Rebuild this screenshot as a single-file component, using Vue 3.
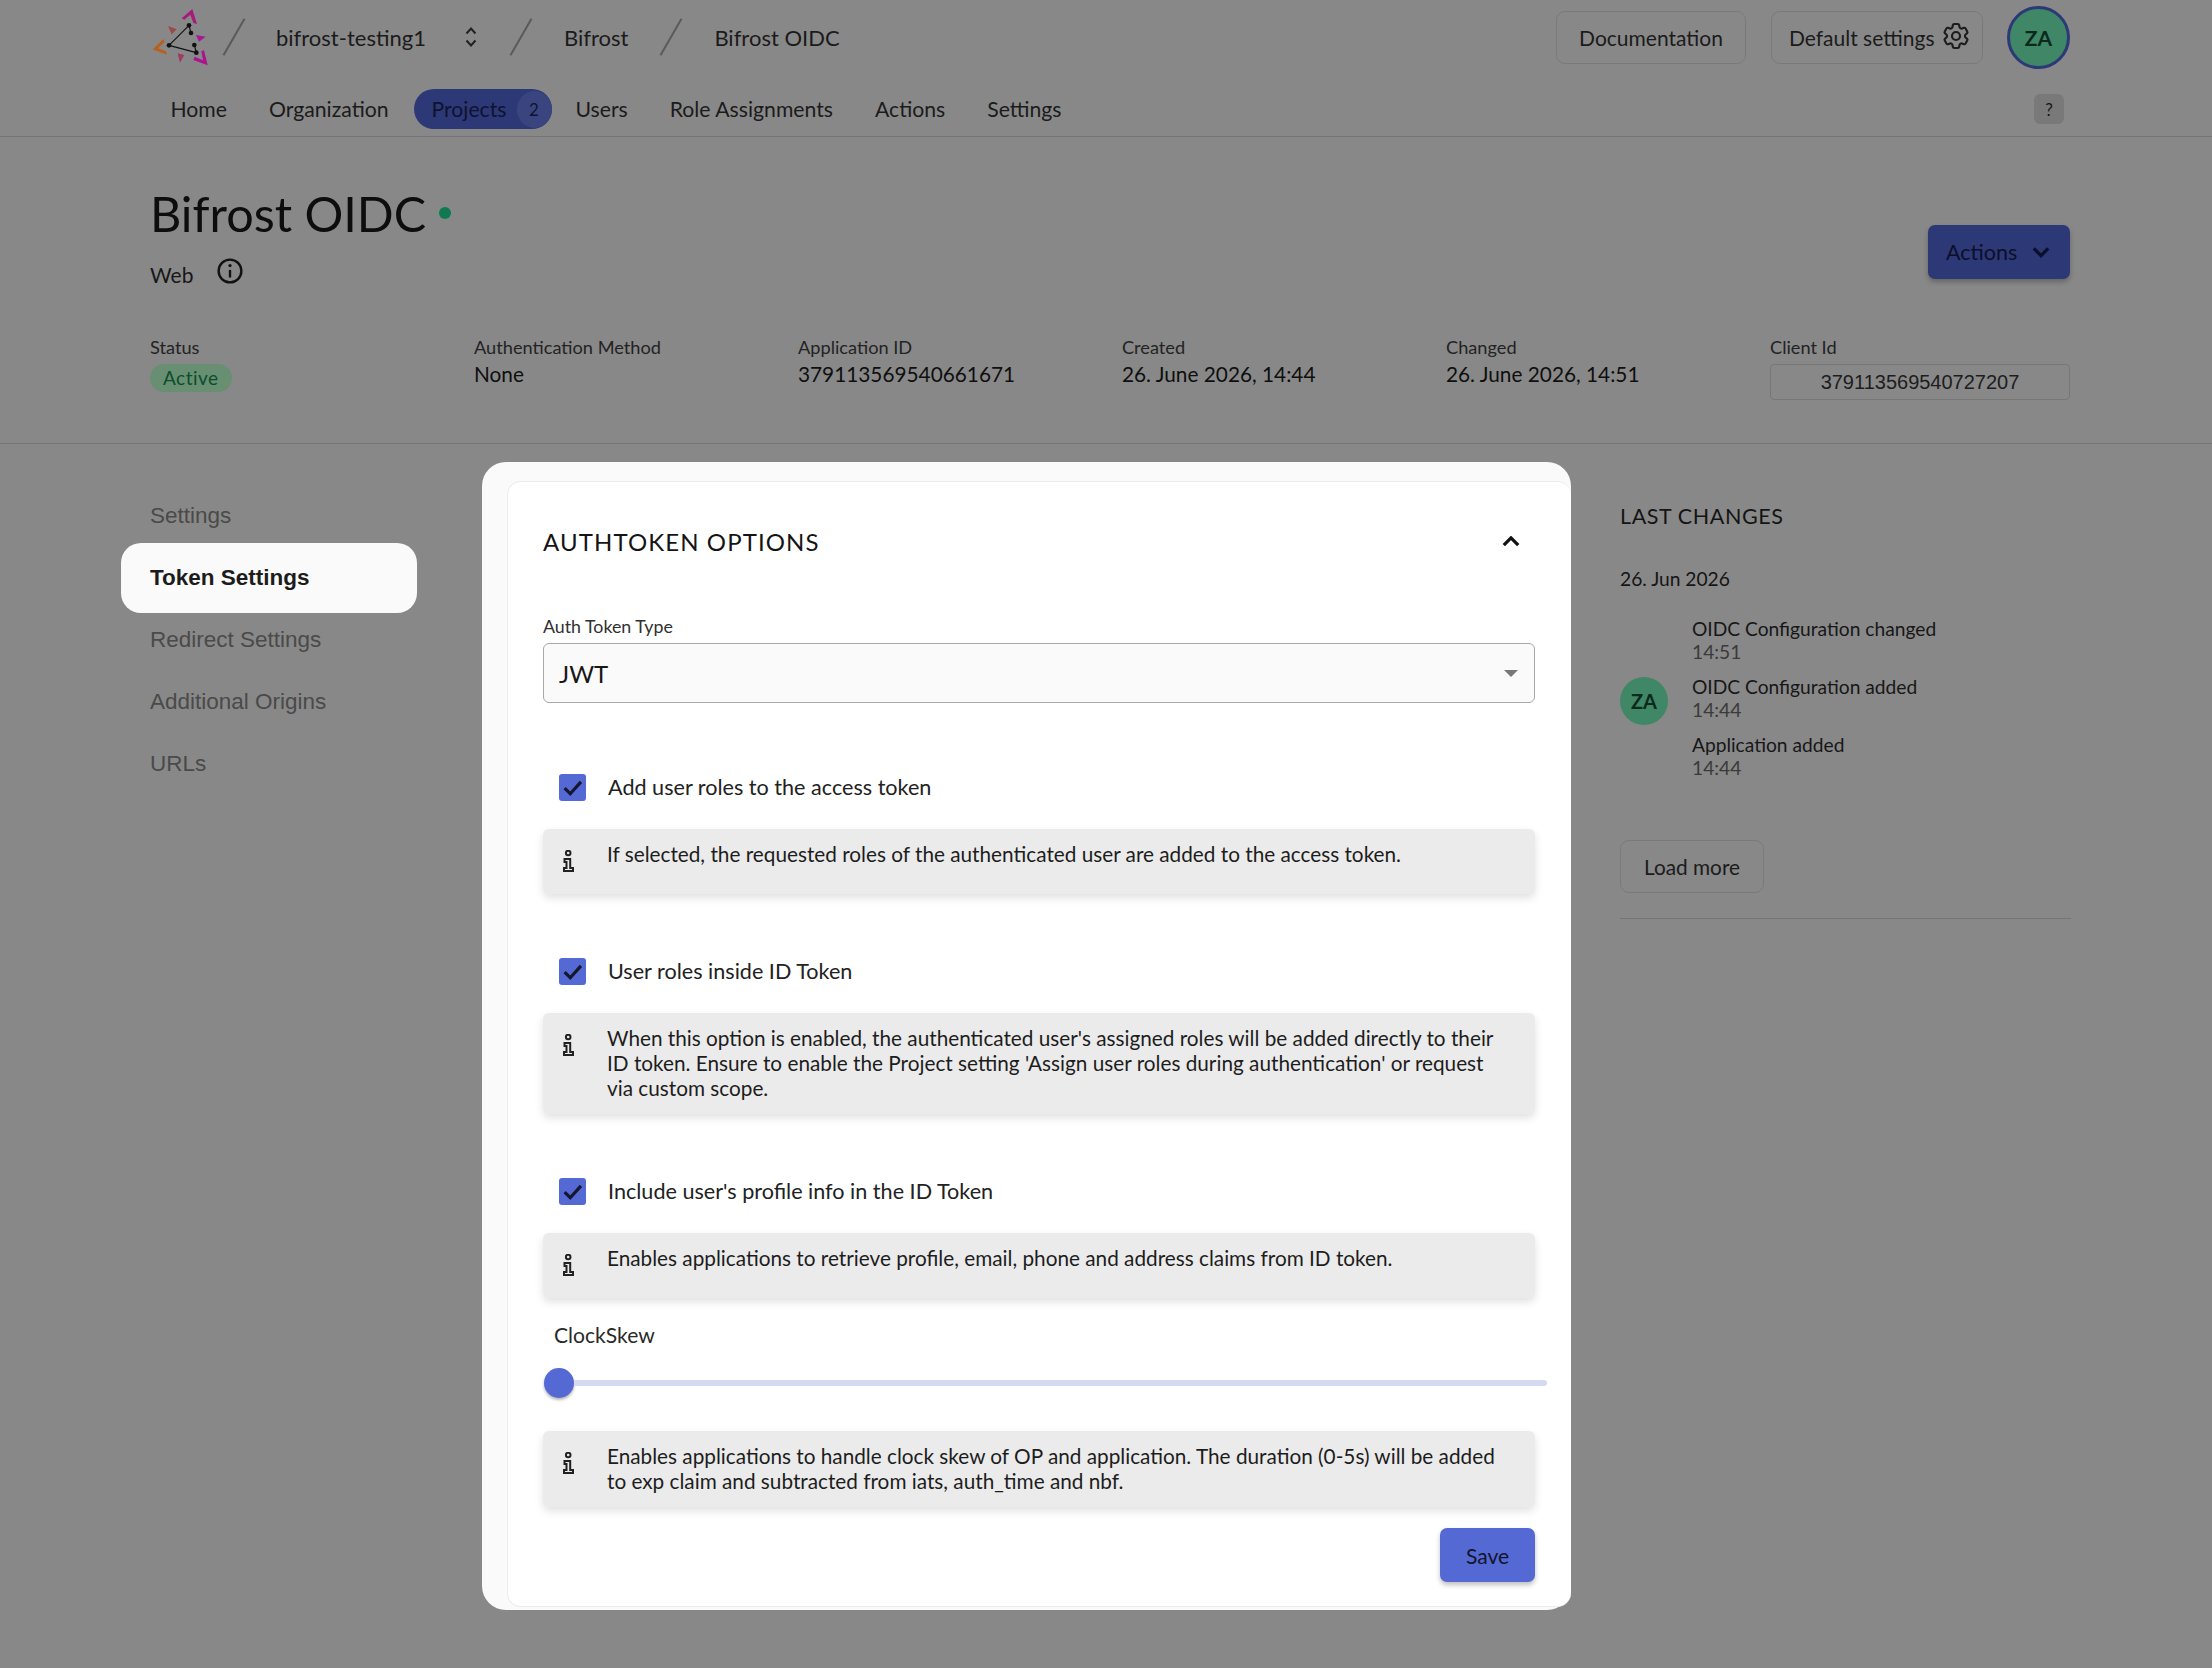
<template>
  <div class="page">
    <header class="top">
      <div class="top-row">
        <div class="crumbs">
          <svg class="logo" viewBox="63 24 180 180" aria-hidden="true">
            <polygon points="155,55 187,27 201,72 190,69 181,44 163,59" fill="#a51d7c" />
            <polygon points="190,180 233,196 222,151 214,153 219,181 194,170" fill="#a9158c" />
            <polygon points="100,117 68,148 111,164 108,154 84,145 104,126" fill="#b85f1e" />
            <polygon points="114,78 140,88 125,103" fill="#9a4a4a" />
            <polygon points="198,105 227,110 207,125" fill="#a51a90" />
            <polygon points="143,160 163,165 150,188" fill="#a03a62" />
            <path d="M177 76 117 136 199 158M177 76 183 99M193 135 199 158" fill="none" stroke="#111" stroke-width="3.500" />
            <g fill="#111">
              <circle cx="177" cy="76" r="7" />
              <circle cx="183" cy="99" r="7" />
              <circle cx="117" cy="136" r="7" />
              <circle cx="193" cy="135" r="7" />
              <circle cx="199" cy="158" r="7" />
            </g>
          </svg>
          <i class="slash slash-first"></i>
          <span class="crumb org-crumb">bifrost-testing1</span>
          <svg class="updown" viewBox="0 0 14 22" aria-hidden="true">
            <path d="M2.500 7.500 7 2.500l4.500 5M2.500 14.500 7 19.500l4.500-5" fill="none" stroke="#222" stroke-width="2" />
          </svg>
          <i class="slash"></i>
          <span class="crumb">Bifrost</span>
          <i class="slash"></i>
          <span class="crumb">Bifrost OIDC</span>
        </div>
        <div class="top-actions">
          <button class="ghost doc-btn">Documentation</button>
          <button class="ghost settings-btn">
            Default settings
            <svg class="gear" viewBox="0 0 24 24" aria-hidden="true">
              <path d="M9.594 3.94c.09-.542.56-.94 1.11-.94h2.593c.55 0 1.02.398 1.11.94l.213 1.281c.063.374.313.686.645.87.074.04.147.083.22.127.324.196.72.257 1.075.124l1.217-.456a1.125 1.125 0 011.37.49l1.296 2.247a1.125 1.125 0 01-.26 1.431l-1.003.827c-.293.24-.438.613-.431.992a6.759 6.759 0 010 .255c-.007.378.138.75.43.99l1.005.828c.424.35.534.954.26 1.43l-1.298 2.247a1.125 1.125 0 01-1.369.491l-1.217-.456c-.355-.133-.75-.072-1.076.124a6.57 6.57 0 01-.22.128c-.331.183-.581.495-.644.869l-.213 1.28c-.09.543-.56.941-1.11.941h-2.594c-.55 0-1.02-.398-1.11-.94l-.213-1.281c-.062-.374-.312-.686-.644-.87a6.52 6.52 0 01-.22-.127c-.325-.196-.72-.257-1.076-.124l-1.217.456a1.125 1.125 0 01-1.369-.49l-1.297-2.247a1.125 1.125 0 01.26-1.431l1.004-.827c.292-.24.437-.613.43-.992a6.932 6.932 0 010-.255c.007-.378-.138-.75-.43-.99l-1.004-.828a1.125 1.125 0 01-.26-1.43l1.297-2.247a1.125 1.125 0 011.37-.491l1.216.456c.356.133.751.072 1.076-.124.072-.044.146-.087.22-.128.332-.183.582-.495.644-.869l.214-1.281z" fill="none" stroke="#1c1c1c" stroke-width="1.600" />
              <path d="M15 12a3 3 0 11-6 0 3 3 0 016 0z" fill="none" stroke="#1c1c1c" stroke-width="1.600" />
            </svg>
          </button>
          <div class="avatar avatar-top">ZA</div>
        </div>
      </div>
      <div class="nav-row">
        <nav class="nav">
          <a v-for="item in navItems" :key="item.label" class="nav-item" :class="{ active: item.count }">
            {{ item.label }}
            <span v-if="item.count" class="nav-count">{{ item.count }}</span>
          </a>
        </nav>
        <span class="help">?</span>
      </div>
    </header>

    <section class="app-head">
      <div class="head-row">
        <div>
          <h1 class="title">Bifrost OIDC<i class="state-dot"></i></h1>
          <div class="type-row">
            <span>Web</span>
            <svg class="info-circle" viewBox="0 0 24 24" aria-hidden="true">
              <circle cx="12" cy="12" r="10.500" fill="none" stroke="#111" stroke-width="2.200" />
              <path d="M12 11v7" stroke="#111" stroke-width="2.200" fill="none" />
              <circle cx="12" cy="7" r="1.500" fill="#111" />
            </svg>
          </div>
        </div>
        <button class="actions-btn">
          Actions
          <svg viewBox="0 0 20 12" aria-hidden="true">
            <path d="M2 2l8 8 8-8" fill="none" stroke="#0b0f2a" stroke-width="3.600" />
          </svg>
        </button>
      </div>
      <div class="meta">
        <div v-for="m in metaItems" :key="m.label" class="meta-col">
          <div class="meta-label">{{ m.label }}</div>
          <span v-if="m.badge" class="badge">{{ m.value }}</span>
          <div v-else-if="m.box" class="client-box">{{ m.value }}</div>
          <div v-else class="meta-value">{{ m.value }}</div>
        </div>
      </div>
    </section>

    <div class="body">
      <aside class="side">
        <a v-for="s in sideItems" :key="s" class="side-item" :class="{ current: s === 'Token Settings' }">{{ s }}</a>
      </aside>

      <main class="panel">
        <div class="card">
          <div class="card-head">
            <h2>AUTHTOKEN OPTIONS</h2>
            <svg class="chev-up" viewBox="0 0 20 12" aria-hidden="true">
              <path d="M2 10l8-8 8 8" fill="none" stroke="#111" stroke-width="3.600" />
            </svg>
          </div>

          <label class="field-label">Auth Token Type</label>
          <div class="select">
            <span>JWT</span>
            <i class="caret"></i>
          </div>

          <div v-for="opt in options" :key="opt.label" class="option">
            <div class="check-row">
              <span class="checkbox">
                <svg viewBox="0 0 24 24" aria-hidden="true">
                  <path d="M5 12.500l5 5L19.500 7" fill="none" stroke="#14172e" stroke-width="2.800" />
                </svg>
              </span>
              {{ opt.label }}
            </div>
            <div class="info-box">
              <svg class="info-i" viewBox="0 0 11 22" aria-hidden="true">
                <circle cx="5.200" cy="3" r="2.300" fill="none" stroke="#222" stroke-width="2" />
                <path d="M1.500 9H7.200v9H10v3H1v-3h2.500v-6h-2z" fill="none" stroke="#222" stroke-width="2" />
              </svg>
              <p>{{ opt.text }}</p>
            </div>
          </div>

          <div class="skew-label">ClockSkew</div>
          <div class="slider">
            <i class="thumb"></i>
            <i class="track"></i>
          </div>
          <div class="info-box skew-info">
            <svg class="info-i" viewBox="0 0 11 22" aria-hidden="true">
              <circle cx="5.200" cy="3" r="2.300" fill="none" stroke="#222" stroke-width="2" />
              <path d="M1.500 9H7.200v9H10v3H1v-3h2.500v-6h-2z" fill="none" stroke="#222" stroke-width="2" />
            </svg>
            <p>Enables applications to handle clock skew of OP and application. The duration (0-5s) will be added to exp claim and subtracted from iats, auth_time and nbf.</p>
          </div>
          <div class="save-row">
            <button class="save">Save</button>
          </div>
        </div>
      </main>

      <aside class="changes">
        <h3>LAST CHANGES</h3>
        <div class="change-date">26. Jun 2026</div>
        <div class="change-group">
          <div class="avatar avatar-small">ZA</div>
          <ul>
            <li v-for="c in changes" :key="c.title + c.time">
              <div>{{ c.title }}</div>
              <div class="change-time">{{ c.time }}</div>
            </li>
          </ul>
        </div>
        <button class="ghost load-more">Load more</button>
        <div class="changes-rule"></div>
      </aside>
    </div>
  </div>
</template>

<script setup>
const navItems = [
  { label: 'Home' },
  { label: 'Organization' },
  { label: 'Projects', count: 2 },
  { label: 'Users' },
  { label: 'Role Assignments' },
  { label: 'Actions' },
  { label: 'Settings' },
]

const metaItems = [
  { label: 'Status', value: 'Active', badge: true },
  { label: 'Authentication Method', value: 'None' },
  { label: 'Application ID', value: '379113569540661671' },
  { label: 'Created', value: '26. June 2026, 14:44' },
  { label: 'Changed', value: '26. June 2026, 14:51' },
  { label: 'Client Id', value: '379113569540727207', box: true },
]

const sideItems = ['Settings', 'Token Settings', 'Redirect Settings', 'Additional Origins', 'URLs']

const options = [
  {
    label: 'Add user roles to the access token',
    text: 'If selected, the requested roles of the authenticated user are added to the access token.',
  },
  {
    label: 'User roles inside ID Token',
    text: "When this option is enabled, the authenticated user's assigned roles will be added directly to their ID token. Ensure to enable the Project setting 'Assign user roles during authentication' or request via custom scope.",
  },
  {
    label: "Include user's profile info in the ID Token",
    text: 'Enables applications to retrieve profile, email, phone and address claims from ID token.',
  },
]

const changes = [
  { title: 'OIDC Configuration changed', time: '14:51' },
  { title: 'OIDC Configuration added', time: '14:44' },
  { title: 'Application added', time: '14:44' },
]
</script>

<style>
html,
body {
  margin: 0;
  background: #888888;
}
</style>

<style scoped>
.page {
  width: 2212px;
  min-height: 1668px;
  background: #888888;
  color: #171717;
  font-family: Lato, "Liberation Sans", sans-serif;
  font-size: 21px;
}
button {
  font-family: inherit;
  cursor: pointer;
}

/* header */
.top {
  border-bottom: 1px solid #757575;
  height: 136px;
}
.top-row {
  display: flex;
  justify-content: space-between;
  align-items: center;
  height: 74px;
  padding: 0 142px 0 151px;
}
.crumbs {
  display: flex;
  align-items: center;
}
.logo {
  width: 60px;
  height: 60px;
  margin-top: 1px;
}
.slash {
  display: block;
  width: 2px;
  height: 42px;
  margin: 0 42px;
  background: #5a5a5a;
  transform: rotate(30deg);
}
.slash-first {
  margin: 0 41px 0 22px;
}
.crumb {
  font-size: 22px;
  color: #1b1b1b;
}
.org-crumb {
  margin-right: 38px;
}
.updown {
  width: 14px;
  height: 22px;
}
.top-actions {
  display: flex;
  align-items: center;
}
.ghost {
  height: 53px;
  border: 1px solid #7a7a7a;
  border-radius: 9px;
  background: transparent;
  color: #1b1b1b;
  font-size: 21px;
}
.doc-btn {
  width: 190px;
  padding: 0;
  margin-right: 25px;
}
.settings-btn {
  display: flex;
  align-items: center;
  gap: 5px;
  width: 212px;
  padding: 0 0 0 17px;
  margin-right: 24px;
}
.gear {
  width: 32px;
  height: 32px;
  margin-top: -2px;
}
.avatar {
  display: flex;
  align-items: center;
  justify-content: center;
  border-radius: 50%;
  background: #3f8767;
  color: #0b2a1c;
  font-weight: 700;
}
.avatar-top {
  width: 57px;
  height: 57px;
  border: 3px solid #2d3876;
  font-size: 21px;
}
.nav-row {
  display: flex;
  justify-content: space-between;
  align-items: center;
  height: 40px;
  margin-top: 15px;
  padding: 0 148px 0 149.500px;
}
.nav {
  display: flex;
  align-items: center;
}
.nav-item {
  padding: 0 21px;
  color: #1b1b1b;
  font-size: 21.200px;
}
.nav-item.active {
  display: flex;
  align-items: center;
  height: 40px;
  margin: 0 3px 0 4px;
  padding: 0 0 0 18px;
  border-radius: 20px;
  background: #2d3876;
  color: #0e1330;
}
.nav-count {
  display: flex;
  align-items: center;
  justify-content: center;
  width: 35px;
  height: 37px;
  margin-left: 10px;
  border-radius: 50%;
  background: #3a4580;
  font-size: 17px;
}
.help {
  display: flex;
  align-items: center;
  justify-content: center;
  width: 30px;
  height: 30px;
  border-radius: 6px;
  background: #797979;
  font-size: 17px;
}

/* app heading */
.app-head {
  border-bottom: 1px solid #757575;
  padding: 39px 142px 43px 150px;
}
.head-row {
  display: flex;
  justify-content: space-between;
}
.title {
  display: flex;
  align-items: center;
  margin: 0;
  font-size: 48.500px;
  font-weight: 400;
  line-height: 74px;
  color: #0d0d0d;
}
.state-dot {
  width: 12px;
  height: 12px;
  margin-left: 13px;
  border-radius: 50%;
  background: #0f7a52;
}
.type-row {
  display: flex;
  align-items: center;
  gap: 24px;
  height: 36px;
  margin-top: 6px;
  font-size: 21px;
}
.info-circle {
  width: 26px;
  height: 26px;
  margin-top: -7px;
}
.actions-btn {
  display: flex;
  align-items: center;
  justify-content: space-between;
  align-self: flex-end;
  width: 142px;
  height: 54px;
  margin-bottom: 13px;
  padding: 0 20px 0 18px;
  border: none;
  border-radius: 7px;
  background: #2d3876;
  color: #0b0f2a;
  font-size: 21.500px;
  box-shadow: 0 3px 5px rgba(0, 0, 0, 0.25);
}
.actions-btn svg {
  width: 18px;
  height: 12px;
}
.meta {
  display: grid;
  grid-template-columns: repeat(5, 324px) 300px;
  margin-top: 42px;
}
.meta-label {
  font-size: 18.200px;
  line-height: 26px;
  color: #232323;
}
.meta-value {
  margin-top: -1px;
  font-size: 20.800px;
  line-height: 30px;
  color: #0f0f0f;
}
.badge {
  display: inline-block;
  margin-top: 4px;
  padding: 0 13px;
  border-radius: 14px;
  background: #688f72;
  color: #0d4d2c;
  font-size: 19px;
  line-height: 28px;
  letter-spacing: 0.5px;
}
.client-box {
  height: 34px;
  margin-top: 4px;
  border: 1px solid #777777;
  border-radius: 4px;
  font-family: "Liberation Sans", sans-serif;
  font-size: 20px;
  line-height: 34px;
  text-align: center;
  color: #1d1d1d;
}

/* three columns */
.body {
  display: flex;
  align-items: flex-start;
  padding-left: 121px;
}
.side {
  display: flex;
  flex-direction: column;
  width: 296px;
  padding-top: 41px;
  margin-right: 65px;
  font-family: "Liberation Sans", sans-serif;
  font-size: 22.500px;
}
.side-item {
  display: flex;
  align-items: center;
  height: 62px;
  padding-left: 29px;
  color: #4a4a4a;
}
.side-item.current {
  height: 70px;
  margin: -4px 0;
  border-radius: 20px;
  background: #fafafa;
  color: #1c1c1c;
  font-weight: 700;
}
.panel {
  width: 1089px;
  margin-top: 18px;
  padding: 19px 0 3px 25px;
  box-sizing: border-box;
  border-radius: 24px;
  background: #fafafa;
}
.card {
  padding: 39px 36px 24px 35px;
  border: 1px solid #ececec;
  border-right: none;
  border-radius: 14px;
  background: #ffffff;
}
.card-head {
  display: flex;
  justify-content: space-between;
  align-items: center;
  height: 40px;
  margin-bottom: 52px;
}
.card-head h2 {
  margin: 0;
  font-size: 24px;
  font-weight: 400;
  letter-spacing: 1.100px;
  color: #141414;
}
.chev-up {
  width: 18px;
  height: 11px;
  margin-right: 15px;
}
.field-label {
  display: block;
  font-size: 17.800px;
  line-height: 26px;
  color: #303030;
}
.select {
  display: flex;
  align-items: center;
  justify-content: space-between;
  height: 60px;
  margin: 4px 0 64px;
  padding: 0 16px 0 15px;
  box-sizing: border-box;
  border: 1px solid #a8a8a8;
  border-radius: 6px;
  background: #fafafa;
  font-size: 24px;
}
.caret {
  width: 0;
  height: 0;
  border: 7px solid transparent;
  border-top: 7px solid #777777;
  border-bottom: none;
}
.option {
  margin-top: 57px;
}
.check-row {
  display: flex;
  align-items: center;
  height: 40px;
  padding-left: 16px;
  font-size: 21.600px;
  color: #222222;
}
.checkbox {
  display: flex;
  width: 27px;
  height: 27px;
  margin-right: 22px;
  border-radius: 3px;
  background: #5469d4;
}
.info-box {
  display: flex;
  gap: 33px;
  min-height: 65px;
  margin-top: 22px;
  padding: 13px 30px 13px 20px;
  box-sizing: border-box;
  border-radius: 6px;
  background: #ebebeb;
  box-shadow: 0 4px 8px rgba(0, 0, 0, 0.12);
  font-size: 20.750px;
  line-height: 25px;
  color: #1d1d1d;
}
.info-box p {
  margin: 0;
}
.info-i {
  flex: none;
  width: 11px;
  height: 22px;
  margin-top: 8px;
}
.skew-label {
  margin-top: 24px;
  padding-left: 11px;
  font-size: 21.100px;
  line-height: 26px;
  color: #2a2a2a;
}
.slider {
  display: flex;
  align-items: center;
  height: 30px;
  margin: 20px -12px 0 1px;
}
.thumb {
  flex: none;
  width: 30px;
  height: 30px;
  border-radius: 50%;
  background: #5469d4;
  box-shadow: 0 2px 3px rgba(0, 0, 0, 0.3);
}
.track {
  flex: 1;
  height: 6px;
  border-radius: 0 3px 3px 0;
  background: #d4daf4;
}
.skew-info {
  margin-top: 33px;
}
.save-row {
  display: flex;
  justify-content: flex-end;
  margin-top: 21px;
}
.save {
  width: 95px;
  height: 54px;
  border: none;
  border-radius: 7px;
  background: #5469d4;
  color: #12152b;
  font-size: 21px;
  box-shadow: 0 3px 5px rgba(0, 0, 0, 0.25);
}
.changes {
  width: 451px;
  margin-left: 49px;
  padding-top: 57px;
  font-size: 19.200px;
}
.changes h3 {
  margin: 0;
  font-size: 21.500px;
  font-weight: 400;
  line-height: 30px;
  letter-spacing: 0.600px;
  color: #141414;
}
.change-date {
  margin-top: 35px;
  line-height: 26px;
  color: #141414;
}
.change-group {
  display: flex;
  align-items: center;
  gap: 24px;
  margin-top: 25px;
}
.avatar-small {
  width: 48px;
  height: 48px;
  margin-top: 5px;
  font-size: 20px;
}
.change-group ul {
  display: flex;
  flex-direction: column;
  gap: 12px;
  margin: 0;
  padding: 0;
  list-style: none;
  line-height: 23px;
}
.change-time {
  color: #3a3a3a;
}
.load-more {
  display: block;
  width: 144px;
  margin-top: 61px;
  padding: 0;
  font-size: 20.800px;
}
.changes-rule {
  margin-top: 25px;
  border-top: 1px solid #757575;
}
</style>
